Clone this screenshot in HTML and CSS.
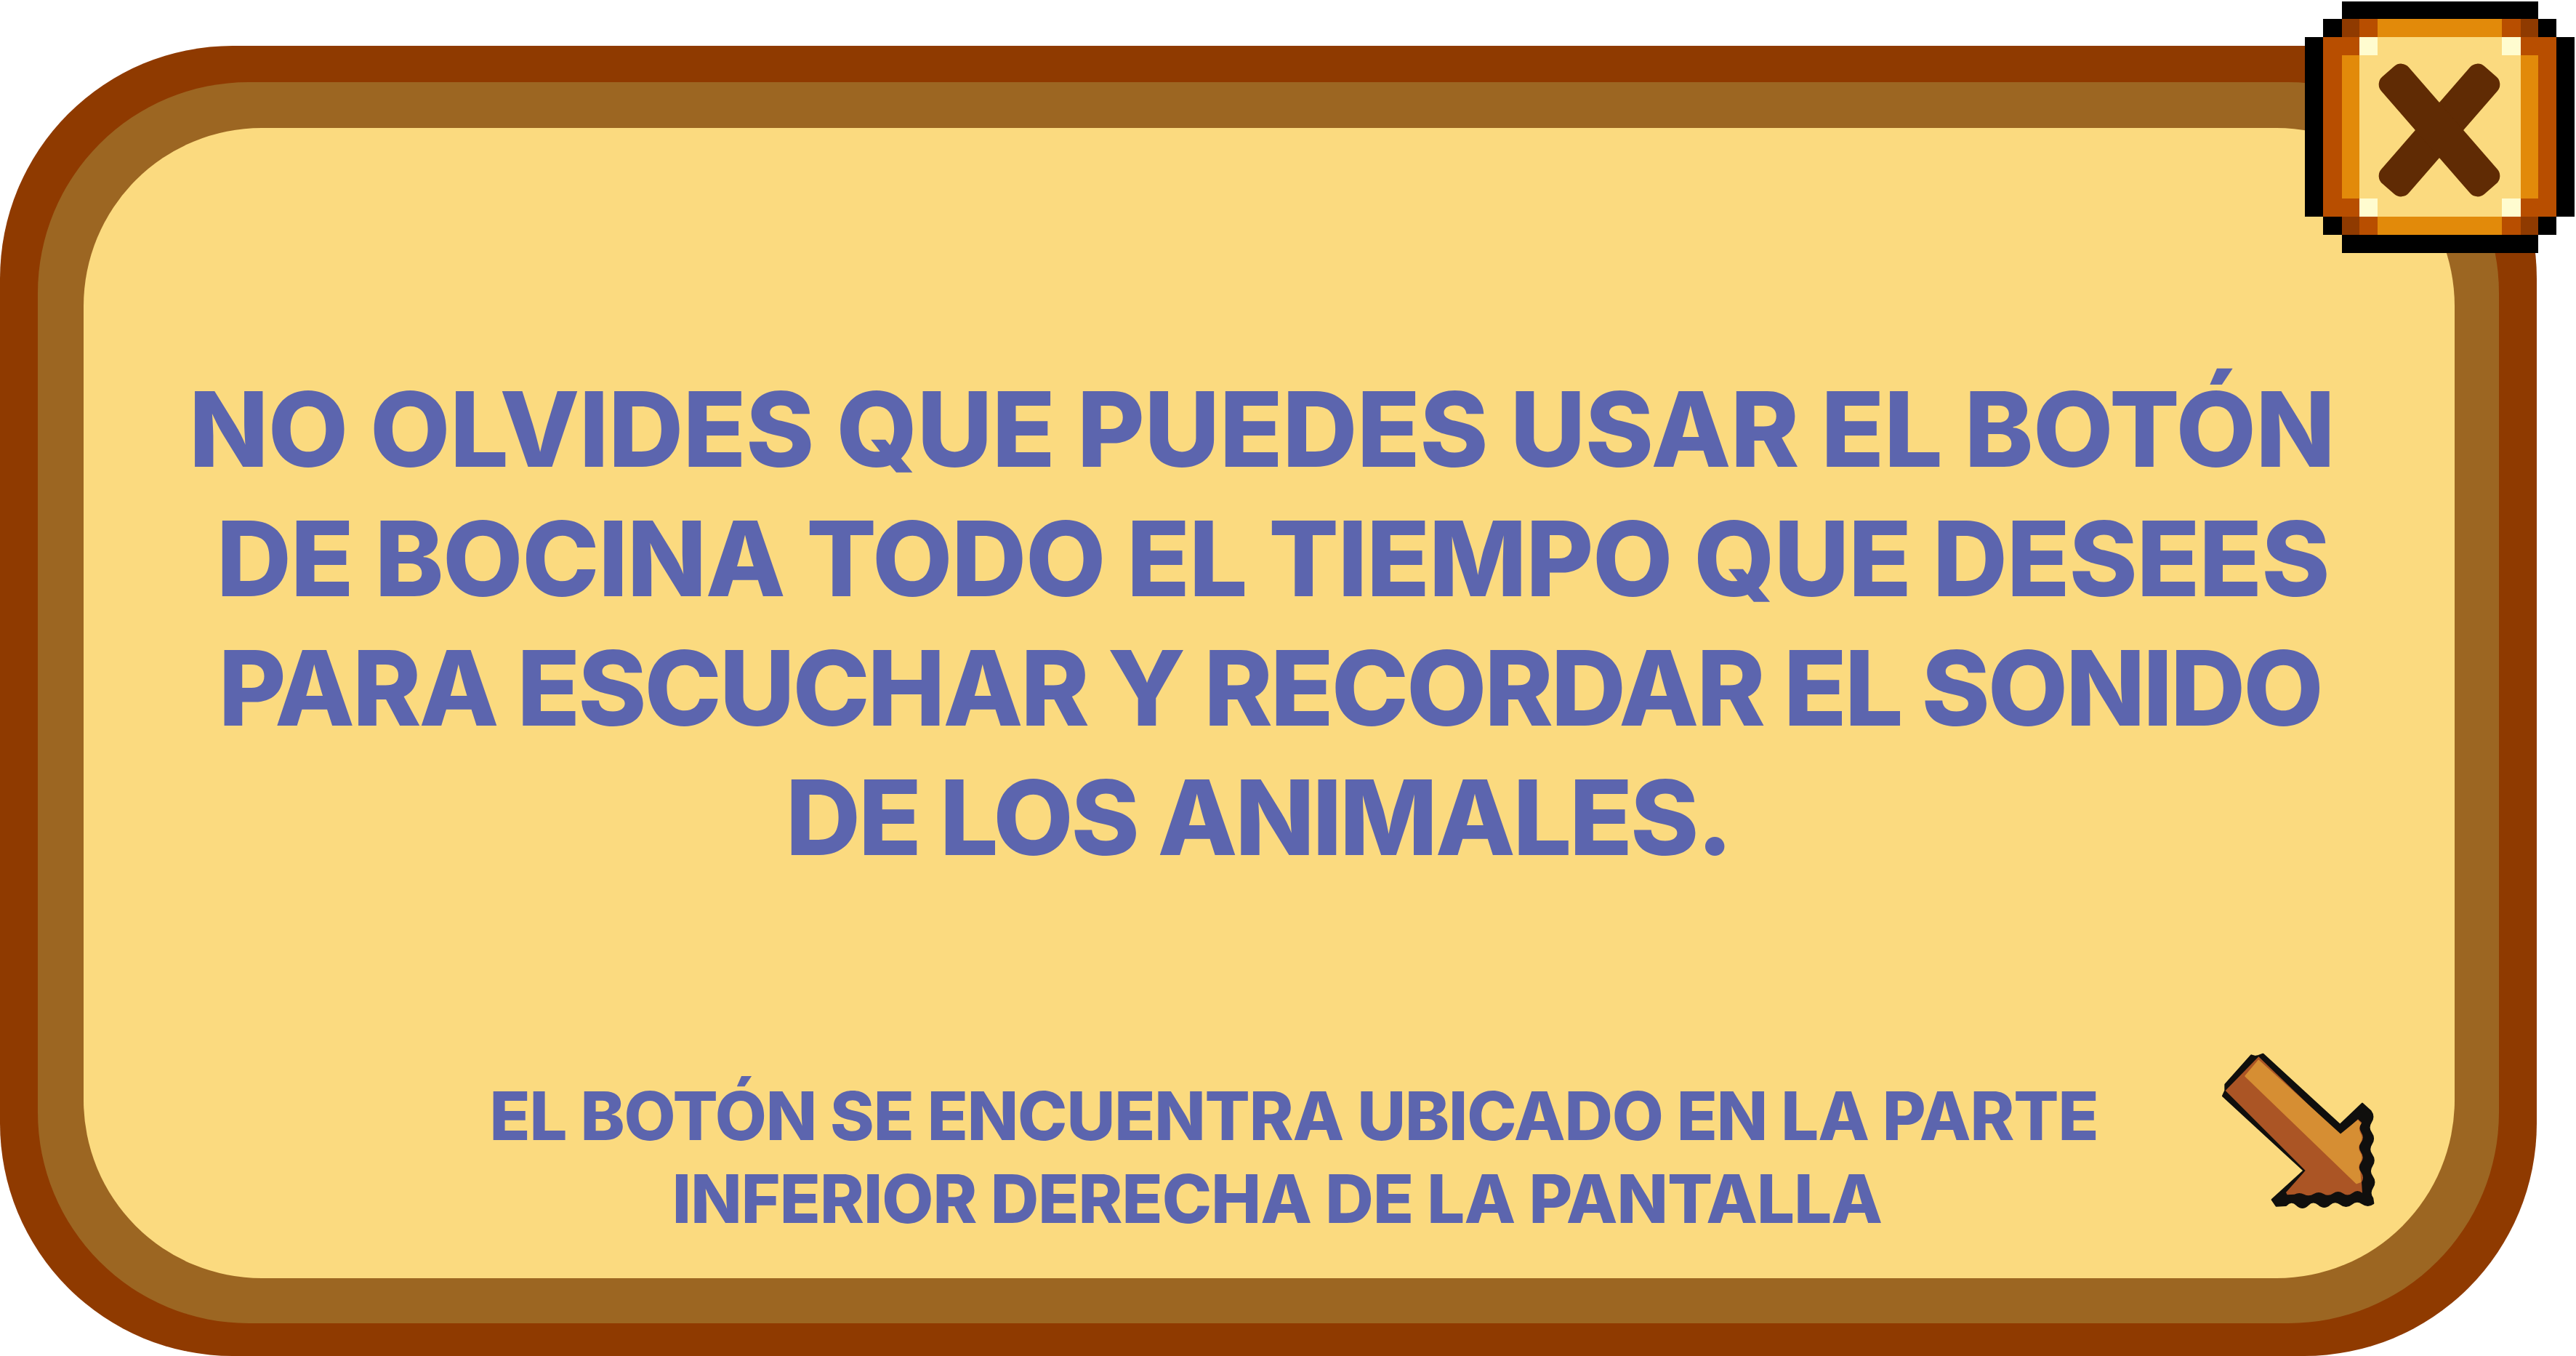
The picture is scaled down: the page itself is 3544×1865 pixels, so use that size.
FILE: index.html
```html
<!DOCTYPE html>
<html>
<head>
  <title>Aviso</title>
  <link rel="stylesheet" href="styles.css">
</head>
<body>
  <div class="panel">
    <div class="panel-mid">
      <div class="panel-inner">
        <p class="message">
          <span class="line line-1">NO OLVIDES QUE PUEDES USAR EL BOTÓN</span>
          <span class="line line-2">DE BOCINA TODO EL TIEMPO QUE DESEES</span>
          <span class="line line-3">PARA ESCUCHAR Y RECORDAR EL SONIDO</span>
          <span class="line line-4">DE LOS ANIMALES.</span>
        </p>
        <div class="hint-row">
          <p class="hint">
            <span class="line hint-1">EL BOTÓN SE ENCUENTRA UBICADO EN LA PARTE</span>
            <span class="line hint-2">INFERIOR DERECHA DE LA PANTALLA</span>
          </p>
          <svg class="arrow" viewBox="0 0 840 780" width="280" height="260">
            <path class="arrow-edge" d="M125,215 L232,95 L248,100 L262,97 L280,90 L598,382 L690,294 L724,325 q16,22 1,45 t1,45 t1,45 t1,45 t1,45 t1,45 t1,45 t1,45 L735,705 q-22,16 -45,0 t-45,2 t-45,0 t-45,2 t-45,0 t-45,2 t-45,0 t-45,2 L335,715 L318,690 L450,570 L115,262 L125,240 Z"/>
            <path class="arrow-dark" d="M125,240 L262,100 L600,425 L672,358 L688,372 q-16,20 -2,41 t-1,41 t0,41 t0,41 t0,41 t2,41 L690,662 q-20,-16 -40,0 t-40,2 t-40,0 t-40,2 t-40,0 t-40,2 t-40,0 L380,670 L375,660 L455,570 Z"/>
            <path class="arrow-light" d="M208,180 L262,116 L600,422 L672,364 L682,376 q-14,20 -2,40 t-1,40 t0,40 t0,40 t0,40 L682,616 L666,622 Z"/>
          </svg>
        </div>
      </div>
    </div>
  </div>

  <svg class="close" viewBox="0 0 371 346" width="371" height="346">
    <rect x="51" y="0" width="270" height="346" fill="#000"/>
    <rect x="25" y="24" width="321" height="297" fill="#000"/>
    <rect x="0" y="49" width="371" height="247" fill="#000"/>
    <rect x="25" y="49" width="321" height="247" fill="#b84e00"/>
    <rect x="51" y="24" width="270" height="297" fill="#b84e00"/>
    <rect x="51" y="24" width="24" height="25" fill="#8f3a00"/>
    <rect x="297" y="24" width="24" height="25" fill="#8f3a00"/>
    <rect x="51" y="296" width="24" height="25" fill="#8f3a00"/>
    <rect x="297" y="296" width="24" height="25" fill="#8f3a00"/>
    <rect x="100" y="24" width="171" height="25" fill="#e28a0a"/>
    <rect x="100" y="296" width="171" height="25" fill="#e28a0a"/>
    <rect x="51" y="74" width="24" height="197" fill="#e28a0a"/>
    <rect x="297" y="74" width="24" height="197" fill="#e28a0a"/>
    <rect x="75" y="49" width="222" height="247" fill="#fbda7f"/>
    <rect x="75" y="49" width="25" height="25" fill="#fffccf"/>
    <rect x="271" y="49" width="26" height="25" fill="#fffccf"/>
    <rect x="75" y="271" width="25" height="25" fill="#fffccf"/>
    <rect x="271" y="271" width="26" height="25" fill="#fffccf"/>
    <rect x="160" y="70" width="50" height="214" rx="14" fill="#602b04" transform="rotate(41 185 177)"/>
    <rect x="160" y="70" width="50" height="214" rx="14" fill="#602b04" transform="rotate(-41 185 177)"/>
  </svg>
</body>
</html>
```

FILE: styles.css
```css
html, body {
  margin: 0;
  background-color: white;
}

body {
  width: 3544px;
  height: 1865px;
  padding-top: 63px;
  box-sizing: border-box;
  position: relative;
  overflow: hidden;
  font-family: Inter, "Liberation Sans", sans-serif;
  font-weight: 800;
  color: #5c65ae;
}

p {
  margin: 0;
}

.panel {
  width: 3490px;
  height: 1802px;
  padding: 50px 52px 45px;
  box-sizing: border-box;
  background-color: #8f3a00;
  border-radius: 320px;
}

.panel-mid {
  height: 100%;
  padding: 63px 61px 62px 63px;
  box-sizing: border-box;
  background-color: #9c6622;
  border-radius: 290px;
}

.panel-inner {
  height: 100%;
  padding-top: 325px;
  box-sizing: border-box;
  background-color: #fbda7f;
  border-radius: 245px;
}

.line {
  display: block;
  white-space: nowrap;
}

.message {
  font-size: 143px;
  line-height: 178px;
  text-align: center;
}

.line-1 { letter-spacing: -0.7px; padding-right: 20px; }
.line-2 { letter-spacing: -1.4px; padding-left: 10px; }
.line-3 { letter-spacing: -3.2px; padding-left: 2px; }
.line-4 { letter-spacing: -3.3px; padding-right: 30px; }

.hint-row {
  display: flex;
  align-items: flex-start;
  margin-top: 265px;
  padding-left: 440px;
}

.hint {
  width: 2400px;
  font-size: 92px;
  line-height: 114px;
  text-align: center;
}

.hint-1 { letter-spacing: -1.1px; padding-left: 50px; }
.hint-2 { letter-spacing: -0.9px; padding-left: 4px; }

.arrow {
  margin-left: 65px;
  margin-top: -58px;
}

.arrow-edge {
  fill: #100f0d;
  stroke: #100f0d;
  stroke-width: 8;
  stroke-linejoin: round;
}

.arrow-dark {
  fill: #ab5525;
}

.arrow-light {
  fill: #d68e33;
  stroke: #d68e33;
  stroke-width: 6;
  stroke-linejoin: round;
}

.close {
  position: absolute;
  left: 3171px;
  top: 2px;
}
```
